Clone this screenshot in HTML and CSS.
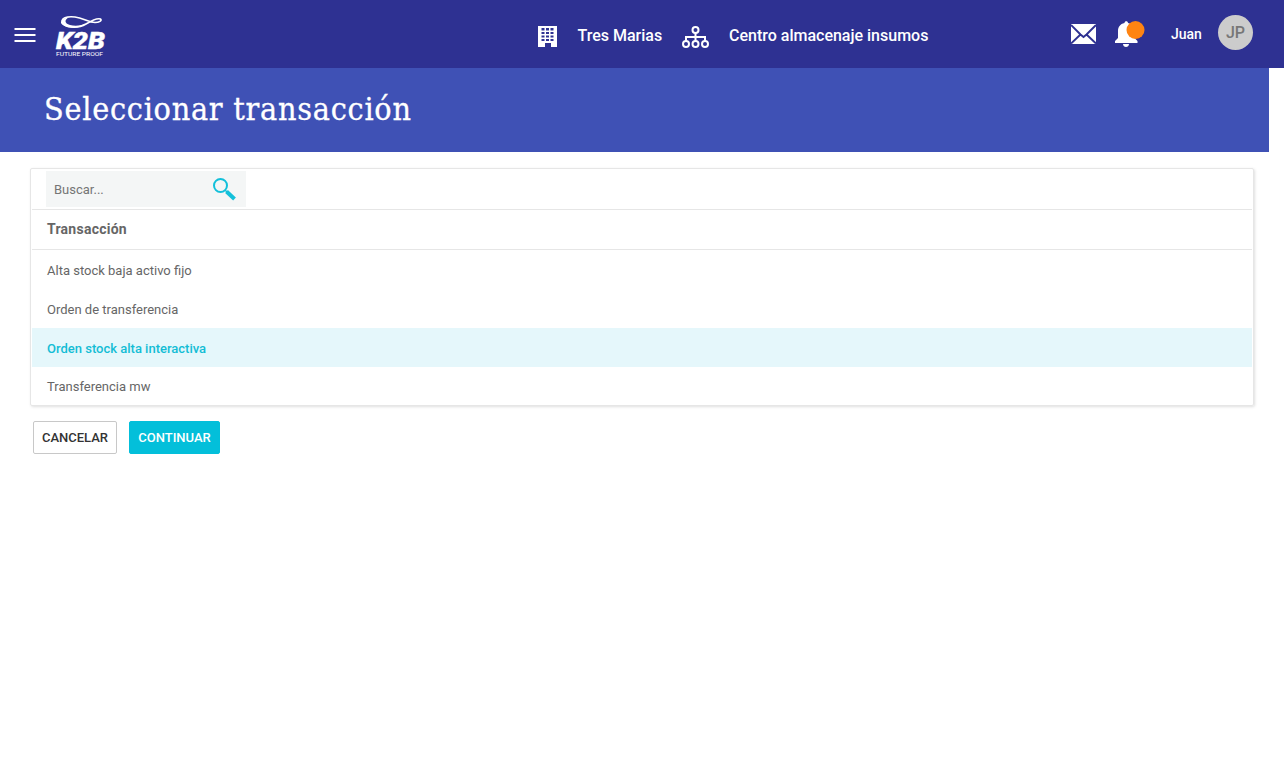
FILE: index.html
```html
<!DOCTYPE html>
<html lang="es">
<head>
<meta charset="utf-8">
<title>Seleccionar transacción</title>
<link rel="stylesheet" href="styles.css">
</head>
<body>
<header class="topbar">
  <div class="brand">
    <svg class="menu" width="22" height="16" viewBox="0 0 22 16"><path d="M.5 1h21v2H.5zM.5 7h21v2H.5zM.5 13h21v2H.5z" fill="#fff"/></svg>
    <svg class="logo" width="54" height="46" viewBox="0 0 54 46" fill="#fff">
      <path d="M46.500 6C43 4.500 37 8 32 11C26 14.500 19 14.500 14 13.500C9 12.500 7 10 8 7.500C9.500 4 16 3.500 21 4C29 5 35 9.500 41 9.500C45 9.500 48.500 7.500 46.500 6Z" fill="none" stroke="#fff" stroke-width="1.600"/>
      <path d="M16 4C5 5 5 13 16 14.500C22 15.500 28 14 32 11C26 13 20 13 16 12C10 10.500 10 6 16 4Z"/>
      <text class="logo-name" x="2" y="35.700" textLength="49" lengthAdjust="spacingAndGlyphs">K2B</text>
      <text class="logo-tag" x="2" y="43" textLength="47" lengthAdjust="spacingAndGlyphs">FUTURE PROOF</text>
    </svg>
  </div>
  <div class="context">
    <svg class="building" width="20" height="22" viewBox="0 0 20 22"><path fill="#fff" d="M0 0h19v21h-6v-4H7v4H0z"/><path fill="#2e3192" d="M3.500 2h3v2.500h-3zM8 2h3v2.500H8zM12.500 2h3v2.500h-3zM3.500 6h3v2h-3zM8 6h3v2H8zM12.500 6h3v2h-3zM3.500 9.500h3v2h-3zM8 9.500h3v2H8zM12.500 9.500h3v2h-3zM3.500 13h3v2h-3zM8 13h3v2H8zM12.500 13h3v2h-3z"/></svg>
    <span class="company">Tres Marias</span>
    <svg class="org" width="28" height="24" viewBox="0 0 28 24" fill="none" stroke="#fff" stroke-width="2"><circle cx="13.500" cy="4" r="3"/><circle cx="4" cy="18" r="3"/><circle cx="13.500" cy="18" r="3"/><circle cx="23" cy="18" r="3"/><path d="M13.500 7v8M4 15v-4h19v4"/></svg>
    <span class="center">Centro almacenaje insumos</span>
  </div>
  <div class="user">
    <svg class="mail" width="26" height="21" viewBox="0 0 26 21"><path fill="#fff" d="M0 0h25v20H0z"/><path d="M0 1l9.500 9.500 3 2.500 3-2.500L25 1M0 19.500l9.500-9M25 19.500l-9.500-9" fill="none" stroke="#2e3192" stroke-width="1.900"/></svg>
    <svg class="bell" width="31" height="27" viewBox="0 0 31 27"><path fill="#fff" d="M9.500 2C9.500-.3 13-.3 13 2c4.500 1 6.500 4.500 6.500 8v7l3 3v2H0v-2l3-3v-7c0-4 2-7 6.500-8zM8 23h6c0 4-6 4-6 0z"/><circle cx="20.500" cy="9" r="9" fill="#ff8412"/></svg>
    <span class="user-name">Juan</span>
    <span class="avatar">JP</span>
  </div>
</header>
<section class="title-band"><h1 class="title">Seleccionar transacción</h1></section>
<main class="content">
  <section class="card">
    <div class="search-row">
      <div class="search"><span>Buscar...</span>
        <svg width="25" height="24" viewBox="0 0 25 24" fill="none" stroke="#13c0da"><circle cx="8.500" cy="8.500" r="6.500" stroke-width="2"/><path d="M13 13l2 2" stroke-width="1.500"/><path d="M14.500 14.500l8 7.500" stroke-width="4"/></svg>
      </div>
    </div>
    <div class="table-head"><span>Transacción</span></div>
    <div class="row">Alta stock baja activo fijo</div>
    <div class="row">Orden de transferencia</div>
    <div class="row selected">Orden stock alta interactiva</div>
    <div class="row last">Transferencia mw</div>
  </section>
  <div class="actions">
    <button class="btn cancel">CANCELAR</button>
    <button class="btn continue">CONTINUAR</button>
  </div>
</main>
</body>
</html>
```
FILE: styles.css
```css
* { box-sizing: border-box; }
body { margin: 0; background: #fff; font-family: Roboto, sans-serif; font-size: 13px; color: #666; }
svg { display: block; flex: none; }
.topbar { height: 68px; background: #2e3192; display: flex; color: #fff; font-weight: 500; white-space: nowrap; }
.brand { display: flex; width: 538px; padding: 13px 0 0 14px; }
.menu { margin-top: 14px; }
.logo { margin-left: 18px; }
.logo-name { font: italic 900 24.5px Roboto, sans-serif; stroke: #fff; stroke-width: .4px; }
.logo-tag { font: 400 5.5px Roboto, sans-serif; }
.context { display: flex; width: 533px; font-size: 16px; line-height: 20px; padding-top: 26px; }
.company { margin-left: 19.5px; width: 104.5px; }
.center { margin-left: 19px; }
.user { display: flex; padding-top: 15px; }
.mail { margin-top: 9px; }
.bell { margin: 6px 0 0 18px; }
.user-name { width: 47px; margin-left: 25px; font-size: 14px; line-height: 38px; }
.avatar { width: 35px; height: 35px; border-radius: 50%; background: #ccc; color: #777; font-size: 16px; line-height: 36px; text-align: center; }
.title-band { width: 1269px; height: 84px; background: #3f51b5; padding: 20px 0 0 44px; }
.title { margin: 0; color: #fff; font: 400 32px/42px "Roboto Slab", "DejaVu Serif Condensed", "DejaVu Serif", serif; letter-spacing: .74px; -webkit-text-stroke: .3px #fff; white-space: nowrap; }
.content { padding: 16px 30px 0; }
.card { height: 238px; border: 1px solid #e6e6e6; border-radius: 2px; box-shadow: 1px 1px 3px rgba(0,0,0,.13); padding: 0 1px; }
.search-row { height: 41px; border-bottom: 1px solid #e6e6e6; padding: 2px 0 0 14px; }
.search { width: 200px; height: 36px; background: #f4f6f6; display: flex; justify-content: space-between; align-items: center; padding: 0 9px 0 8px; color: #757575; }
.table-head { height: 40px; border-bottom: 1px solid #e6e6e6; padding-left: 15px; font-size: 14px; line-height: 38px; font-weight: 700; letter-spacing: .25px; }
.row { height: 39px; padding-left: 15px; line-height: 41px; }
.selected { background: #e5f7fb; color: #13bdd5; font-weight: 500; }
.last { height: 38px; line-height: 39px; }
.actions { display: flex; gap: 12px; padding: 15px 0 0 3px; }
.btn { height: 33px; border-radius: 2px; font: 500 13px/31px Roboto, sans-serif; padding: 0; }
.cancel { width: 84px; background: #fff; color: #333; border: 1px solid #c8c8c8; }
.continue { width: 91px; background: #03bfda; color: #fff; border: 1px solid #03bfda; }
```
